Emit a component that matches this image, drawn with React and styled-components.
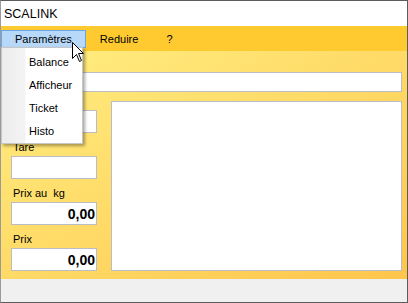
import React from 'react'
import styled, { createGlobalStyle } from 'styled-components'

const GlobalStyle = createGlobalStyle`
html, body {
    margin: 0;
    padding: 0;
    background: #fff;
}
body {
    font-family: "Liberation Sans", Arial, sans-serif;
    color: #000;
}
`

const Window = styled.div`
position: relative;
width: 408px;
height: 303px;
box-sizing: border-box;
border: 1px solid #5c5c5c;
border-left-color: #9a9a9a;
display: flex;
flex-direction: column;
overflow: hidden;
`

const TitleBar = styled.div`
height: 25px;
flex: none;
background: #fff;
display: flex;
align-items: center;
padding-left: 3px;
font-size: 12.5px;
`

const MenuBar = styled.div`
position: relative;
height: 25px;
flex: none;
background: #ffca30;
display: flex;
align-items: center;
font-size: 11px;
`

const MenuItem = styled.div`
height: 18px;
box-sizing: border-box;
padding: 0 13px;
display: flex;
align-items: center;
border: 1px solid ${({ open }) => open ? '#6aa6e6' : 'transparent'};
background: ${({ open }) => open ? '#b7d8f8' : 'transparent'};
margin-top: 1px;
`

const Dropdown = styled.div`
position: absolute;
left: 0;
top: 21px;
width: 82px;
box-sizing: border-box;
border: 1px solid #c6c6c6;
background: linear-gradient(to right, #ececec 0, #f4f4f4 23px, #fff 24px);
box-shadow: 2px 2px 3px rgba(0, 0, 0, 0.35);
padding: 2px 0 1px;
z-index: 5;
`

const DropItem = styled.div`
height: 23px;
display: flex;
align-items: center;
padding-left: 27px;
font-size: 11px;
`

const Cursor = styled.svg`
position: absolute;
left: 71px;
top: 41px;
z-index: 10;
`

const Panel = styled.div`
flex: 1;
background: linear-gradient(to bottom right, #ffef82, #ffc54c);
padding: 0 5px 8px 10px;
display: flex;
flex-direction: column;
`

const TopLabel = styled.div`
height: 21px;
`

const WideInput = styled.div`
height: 20px;
box-sizing: border-box;
background: #fff;
border: 1px solid #bcbcc4;
`

const Body = styled.div`
margin-top: 2px;
display: grid;
grid-template-columns: 86px 291px;
column-gap: 14px;
`

const Column = styled.div`
display: flex;
flex-direction: column;
`

const Label = styled.div`
font-size: 11px;
line-height: 14px;
min-height: 14px;
margin: ${({ first }) => first ? '0' : '7px'} 0 2px 2px;
white-space: pre;
`

const Field = styled.div`
height: 23px;
box-sizing: border-box;
background: #fff;
border: 1px solid #bcbcc4;
display: flex;
align-items: center;
justify-content: flex-end;
padding-right: 1px;
font-size: 14px;
font-weight: bold;
`

const TextArea = styled.div`
margin-top: 7px;
height: 170px;
box-sizing: border-box;
background: #fff;
border: 1px solid #bcbcc4;
`

const Status = styled.div`
height: 23px;
flex: none;
background: #f0f0f0;
`

// the first label sits under the open menu, so it is left blank
const fields = [
    { id: 'poids', label: '', value: '' },
    { id: 'tare', label: 'Tare', value: '' },
    { id: 'prixkg', label: 'Prix au  kg', value: '0,00' },
    { id: 'prix', label: 'Prix', value: '0,00' },
]

export default function App() {
    return (
        <>
            <GlobalStyle />
            <Window>
                <TitleBar>SCALINK</TitleBar>
                <MenuBar>
                    <MenuItem open>Paramètres</MenuItem>
                    <MenuItem>Reduire</MenuItem>
                    <MenuItem>?</MenuItem>
                    <Dropdown>
                        <DropItem>Balance</DropItem>
                        <DropItem>Afficheur</DropItem>
                        <DropItem>Ticket</DropItem>
                        <DropItem>Histo</DropItem>
                    </Dropdown>
                </MenuBar>
                <Panel>
                    <TopLabel />
                    <WideInput />
                    <Body>
                        <Column>
                            {fields.map((f, i) => (
                                <React.Fragment key={f.id}>
                                    <Label first={i === 0}>{f.label}</Label>
                                    <Field>{f.value}</Field>
                                </React.Fragment>
                            ))}
                        </Column>
                        <TextArea />
                    </Body>
                </Panel>
                <Status />
                <Cursor width="13" height="21" viewBox="0 0 13 21">
                    <path
                        d="M0.5 0.5 L0.5 16.5 L4.5 12.5 L7.5 19.5 L9.5 18.5 L6.5 11.5 L11.5 11.5 Z"
                        fill="#fff"
                        stroke="#000"
                        strokeWidth="1"
                        strokeLinejoin="miter"
                    />
                </Cursor>
            </Window>
        </>
    )
}
